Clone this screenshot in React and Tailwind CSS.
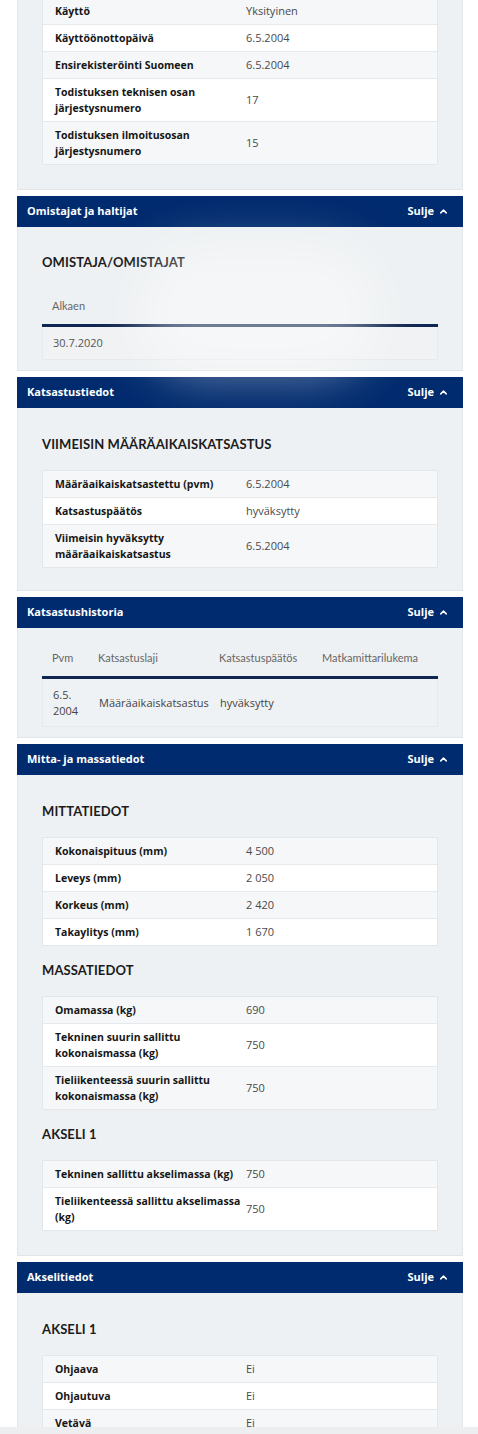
import React from 'react';
import { ChevronUp } from 'lucide-react';

const sans = { fontFamily: '"Open Sans", "Liberation Sans", sans-serif' };
const head = { fontFamily: 'Lato, "Open Sans", sans-serif' };

const PanelHeader = ({ title }) => (
  <div className="h-[31px] bg-[#002b6e] flex items-center justify-between pl-[10px] pr-[14px] text-white text-[11px] font-bold" style={sans}>
    <span>{title}</span>
    <span className="flex items-center gap-[4px]">
      Sulje
      <ChevronUp size={11} strokeWidth={3.2} />
    </span>
  </div>
);

const SectionTitle = ({ children, first }) => (
  <h3
    className={`h-[22px] flex items-center text-[13px] font-bold text-[#1b1b1b] tracking-[0.1px] mb-[14px] ${first ? '' : 'mt-[14px]'}`}
    style={head}
  >
    {children}
  </h3>
);

const InfoTable = ({ rows }) => (
  <div className="border border-[#e3e7ea] bg-white">
    {rows.map(([label, value], i) => (
      <div
        key={label}
        className={`grid grid-cols-[203px_1fr] items-center py-[5px] leading-[16px] ${i > 0 ? 'border-t border-[#e6eaec]' : ''} ${i % 2 === 0 ? 'bg-[#f5f7f8]' : 'bg-white'}`}
        style={sans}
      >
        <span className="pl-[12px] text-[10.5px] font-bold text-[#161616]">{label}</span>
        <span className="text-[11px] font-normal text-[#4a4a4a]">{value}</span>
      </div>
    ))}
  </div>
);

const Panel = ({ title, children, className = '', wrap = '' }) => (
  <div className={`ml-[17px] mr-[15px] mb-[6px] ${wrap}`}>
    {title && <PanelHeader title={title} />}
    <div className={`bg-[#eef1f3] border-x border-b border-[#e2e6e8] px-[24px] ${className}`}>{children}</div>
  </div>
);

export default function App() {
  return (
    <div className="relative h-[1434px] overflow-hidden bg-white">
      <Panel className="pb-[24px]" wrap="-mt-[3px]">
        <InfoTable
          rows={[
            ['Käyttö', 'Yksityinen'],
            ['Käyttöönottopäivä', '6.5.2004'],
            ['Ensirekisteröinti Suomeen', '6.5.2004'],
            ['Todistuksen teknisen osan järjestysnumero', '17'],
            ['Todistuksen ilmoitusosan järjestysnumero', '15'],
          ]}
        />
      </Panel>

      <Panel title="Omistajat ja haltijat" className="pt-[25px] pb-[10px] relative">
        <SectionTitle first>OMISTAJA/OMISTAJAT</SectionTitle>
        <div className="h-[36px] flex items-center pl-[10px] text-[11px] text-[#666] font-normal" style={head}>Alkaen</div>
        <div className="h-[3px] bg-[#0f2650]" />
        <div className="h-[33px] flex items-center pl-[10px] text-[11px] text-[#555] bg-[#f0f2f4] border-x border-b border-[#e6eaec]" style={sans}>30.7.2020</div>
        <div className="absolute left-[120px] top-[20px] w-[240px] h-[130px] bg-white/40 blur-xl rounded-full pointer-events-none" />
      </Panel>

      <Panel title="Katsastustiedot" className="pt-[26px] pb-[22px]">
        <SectionTitle first>VIIMEISIN MÄÄRÄAIKAISKATSASTUS</SectionTitle>
        <InfoTable
          rows={[
            ['Määräaikaiskatsastettu (pvm)', '6.5.2004'],
            ['Katsastuspäätös', 'hyväksytty'],
            ['Viimeisin hyväksytty määräaikaiskatsastus', '6.5.2004'],
          ]}
        />
      </Panel>

      <Panel title="Katsastushistoria" className="pt-[12px] pb-[10px]">
        <div className="grid grid-cols-[46px_121px_103px_1fr] h-[36px] items-center text-[11px] text-[#666] font-normal" style={head}>
          <span className="pl-[10px]">Pvm</span>
          <span className="pl-[10px]">Katsastuslaji</span>
          <span className="pl-[10px]">Katsastuspäätös</span>
          <span className="pl-[10px]">Matkamittarilukema</span>
        </div>
        <div className="h-[3px] bg-[#0f2650]" />
        <div className="grid grid-cols-[46px_121px_103px_1fr] h-[48px] items-center text-[11px] text-[#444] leading-[16px] bg-[#eff2f4] border-x border-b border-[#e6eaec]" style={sans}>
          <span className="pl-[10px]">6.5.<br />2004</span>
          <span className="pl-[10px]">Määräaikaiskatsastus</span>
          <span className="pl-[10px]">hyväksytty</span>
          <span />
        </div>
      </Panel>

      <Panel title="Mitta- ja massatiedot" className="pt-[26px] pb-[24px]">
        <SectionTitle first>MITTATIEDOT</SectionTitle>
        <InfoTable
          rows={[
            ['Kokonaispituus (mm)', '4 500'],
            ['Leveys (mm)', '2 050'],
            ['Korkeus (mm)', '2 420'],
            ['Takaylitys (mm)', '1 670'],
          ]}
        />
        <SectionTitle>MASSATIEDOT</SectionTitle>
        <InfoTable
          rows={[
            ['Omamassa (kg)', '690'],
            ['Tekninen suurin sallittu kokonaismassa (kg)', '750'],
            ['Tieliikenteessä suurin sallittu kokonaismassa (kg)', '750'],
          ]}
        />
        <SectionTitle>AKSELI 1</SectionTitle>
        <InfoTable
          rows={[
            ['Tekninen sallittu akselimassa (kg)', '750'],
            ['Tieliikenteessä sallittu akselimassa (kg)', '750'],
          ]}
        />
      </Panel>

      <Panel title="Akselitiedot" className="pt-[26px] pb-[24px]">
        <SectionTitle first>AKSELI 1</SectionTitle>
        <InfoTable
          rows={[
            ['Ohjaava', 'Ei'],
            ['Ohjautuva', 'Ei'],
            ['Vetävä', 'Ei'],
            ['Jarrullinen', 'Kyllä'],
          ]}
        />
      </Panel>

      <div className="absolute left-0 right-0 bottom-0 h-[7px] bg-[#eceeef]" />
    </div>
  );
}
